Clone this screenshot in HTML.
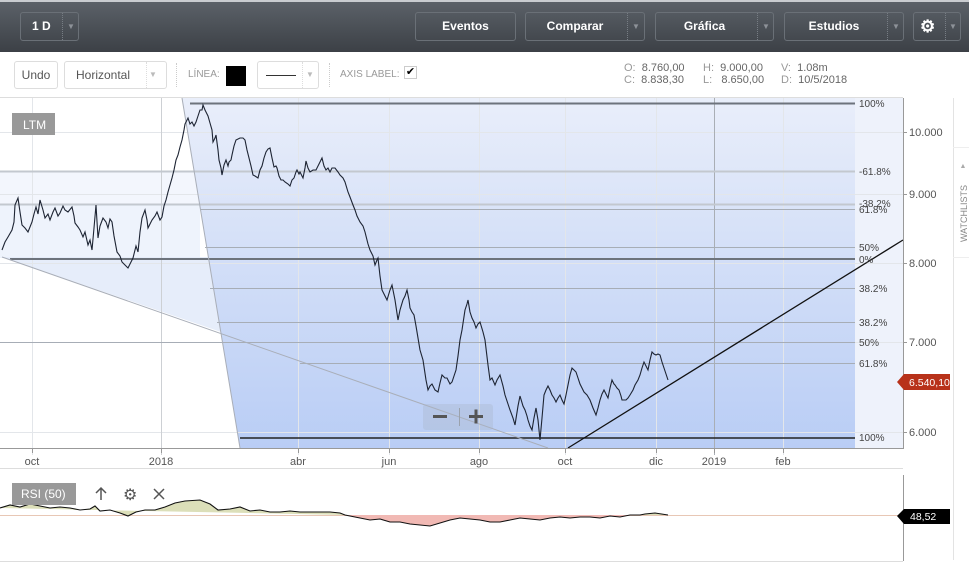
<!DOCTYPE html>
<html><head><meta charset="utf-8"><style>
*{margin:0;padding:0;box-sizing:border-box}
body{width:969px;height:565px;overflow:hidden;background:#fff;font-family:"Liberation Sans",sans-serif;position:relative}
.top{position:absolute;left:0;top:0;width:969px;height:52px;background:linear-gradient(#5b6168,#3c4046);border-top:2px solid #c9ccd0}
.btn{position:absolute;top:10px;height:29px;border:1px solid #6a7077;border-radius:3px;color:#fff;font-weight:bold;font-size:12px;line-height:27px;text-align:center}
.btn .sep{position:absolute;top:0;bottom:0;border-left:1px dotted #777d84}
.btn .ar{position:absolute;top:0;width:16px;text-align:center;font-size:8px;color:#8d9298}
.tb{position:absolute;top:61px;height:28px;border:1px solid #ddd;border-radius:3px;font-size:12px;color:#555;line-height:26px}
.lbl{position:absolute;font-size:10px;color:#999}
.vsep{position:absolute;top:63px;height:24px;border-left:1px dotted #ccc}
.ohlc{position:absolute;font-size:11px;color:#999;line-height:12px}
.ohlc b{font-weight:normal;color:#666}
</style></head><body>
<div class="top">
 <div class="btn" style="left:20px;width:59px;text-align:left;padding-left:11px">1 D<span class="sep" style="left:41px"></span><span class="ar" style="left:42px">▼</span></div>
 <div class="btn" style="left:415px;width:101px">Eventos</div>
 <div class="btn" style="left:525px;width:120px;padding-right:20px">Comparar<span class="sep" style="left:101px"></span><span class="ar" style="left:102px">▼</span></div>
 <div class="btn" style="left:655px;width:119px;padding-right:20px">Gráfica<span class="sep" style="left:101px"></span><span class="ar" style="left:102px">▼</span></div>
 <div class="btn" style="left:784px;width:120px;padding-right:20px">Estudios<span class="sep" style="left:102px"></span><span class="ar" style="left:103px">▼</span></div>
 <div class="btn" style="left:913px;width:48px;text-align:left;padding-left:6px;font-size:17px">⚙<span class="sep" style="left:31px"></span><span class="ar" style="left:31px">▼</span></div>
</div>
<div class="tb" style="left:14px;width:44px;text-align:center">Undo</div>
<div class="tb" style="left:64px;width:103px;padding-left:11px">Horizontal<span style="position:absolute;left:81px;top:0;bottom:0;border-left:1px dotted #ddd"></span><span style="position:absolute;left:84px;font-size:8px;color:#bbb">▼</span></div>
<div class="vsep" style="left:176px"></div>
<div class="lbl" style="left:188px;top:69px">LÍNEA:</div>
<div style="position:absolute;left:226px;top:66px;width:20px;height:20px;background:#000"></div>
<div class="tb" style="left:257px;width:62px"><span style="position:absolute;left:8px;top:13px;width:30px;border-top:1px solid #333"></span><span style="position:absolute;left:44px;top:0;bottom:0;border-left:1px dotted #ddd"></span><span style="position:absolute;left:48px;font-size:8px;color:#bbb">▼</span></div>
<div class="vsep" style="left:329px"></div>
<div class="lbl" style="left:340px;top:69px">AXIS LABEL:</div>
<div style="position:absolute;left:404px;top:66px;width:13px;height:13px;border:1px solid #ccc;font-size:11px;line-height:11px;text-align:center">✔</div>
<div class="ohlc" style="left:624px;top:62px">O:&nbsp; <b>8.760,00</b><br>C:&nbsp; <b>8.838,30</b></div>
<div class="ohlc" style="left:703px;top:62px">H:&nbsp; <b>9.000,00</b><br>L:&nbsp;&nbsp; <b>8.650,00</b></div>
<div class="ohlc" style="left:781px;top:62px">V:&nbsp; <b>1.08m</b><br>D:&nbsp; <b>10/5/2018</b></div>

<svg style="position:absolute;left:0;top:0" width="969" height="565" font-family="Liberation Sans, sans-serif">
<defs><linearGradient id="g" x1="0" y1="0" x2="0" y2="1"><stop offset="0" stop-color="#e9eefa"/><stop offset="1" stop-color="#b9cdf5"/></linearGradient></defs>
<line x1="0" y1="97.5" x2="903" y2="97.5" stroke="#ddd"/>
<rect x="0" y="172" width="200" height="86" fill="#f3f6fd"/>
<rect x="0" y="204" width="200" height="54" fill="#eef3fc"/>
<polygon points="2,257 855,257 855,448 560,448" fill="#e6edfa"/>
<polygon points="182,98 855,98 855,448 240,448" fill="url(#g)"/>
<rect x="855" y="98" width="48" height="350" fill="#eef2fb"/>
<g stroke="#e3e6ea" stroke-width="1">
<line x1="0" y1="132.5" x2="903" y2="132.5"/><line x1="0" y1="194.5" x2="903" y2="194.5"/><line x1="0" y1="263.5" x2="903" y2="263.5"/><line x1="0" y1="342.5" x2="903" y2="342.5"/><line x1="0" y1="432.5" x2="903" y2="432.5"/>
<line x1="32.5" y1="98" x2="32.5" y2="455"/><line x1="298.5" y1="98" x2="298.5" y2="455"/><line x1="389.5" y1="98" x2="389.5" y2="455"/><line x1="479.5" y1="98" x2="479.5" y2="455"/><line x1="565.5" y1="98" x2="565.5" y2="455"/><line x1="656.5" y1="98" x2="656.5" y2="455"/><line x1="783.5" y1="98" x2="783.5" y2="455"/>
</g>
<line x1="161.5" y1="98" x2="161.5" y2="455" stroke="#cdd0d4"/>
<line x1="714.5" y1="98" x2="714.5" y2="455" stroke="#a9aeb5"/>
<g stroke="#a7adb6" stroke-width="1">
<line x1="0" y1="171.5" x2="855" y2="171.5" stroke="#c3c8cf" stroke-width="2"/>
<line x1="0" y1="204.5" x2="855" y2="204.5" stroke="#c3c8cf" stroke-width="2"/>
<line x1="200" y1="209.5" x2="855" y2="209.5"/>
<line x1="205" y1="247.5" x2="855" y2="247.5"/>
<line x1="210" y1="288.5" x2="855" y2="288.5"/>
<line x1="217" y1="322.5" x2="855" y2="322.5"/>
<line x1="0" y1="342.5" x2="855" y2="342.5"/>
<line x1="300" y1="363.5" x2="855" y2="363.5"/>
</g>
<line x1="190" y1="103.5" x2="855" y2="103.5" stroke="#6d737c" stroke-width="2"/>
<line x1="10" y1="259" x2="855" y2="259" stroke="#6d737c" stroke-width="2"/>
<line x1="240" y1="438" x2="855" y2="438" stroke="#222" stroke-width="1.5"/>
<line x1="182" y1="98" x2="240" y2="448" stroke="#a9aeb8"/>
<line x1="2" y1="257" x2="548" y2="448" stroke="#a9aeb8"/>
<line x1="568" y1="448" x2="903" y2="240" stroke="#111" stroke-width="1.3"/>
<g font-size="10" fill="#444">
<text x="859" y="107">100%</text><text x="859" y="175">-61.8%</text><text x="859" y="207">-38.2%</text><text x="859" y="213">61.8%</text><text x="859" y="251">50%</text><text x="859" y="263">0%</text><text x="859" y="292">38.2%</text><text x="859" y="326">38.2%</text><text x="859" y="346">50%</text><text x="859" y="367">61.8%</text><text x="859" y="441">100%</text>
</g>
<polyline fill="none" stroke="#1d2433" stroke-width="1.1" points="2,250 5,242 8,237 12,230 14,222 15,205 18,198 20,212 22,225 25,228 28,232 32,222 34,214 36,207 38,214 40,200 43,210 45,218 48,214 50,220 53,212 55,208 58,216 60,213 63,206 65,210 68,212 72,207 74,216 75,223 78,227 80,230 83,237 85,232 88,245 90,240 92,250 94,228 96,205 98,238 100,226 103,218 106,222 108,228 110,219 112,222 114,236 117,252 120,256 122,262 125,265 128,268 131,262 133,258 136,246 138,252 140,232 142,218 145,210 147,220 148,228 150,224 152,220 155,216 157,212 160,220 162,217 164,206 166,200 168,192 170,185 172,178 174,170 176,160 178,155 180,147 182,140 184,130 185,124 188,118 190,124 192,122 194,126 196,122 198,116 200,110 202,110 203,105 205,110 206,112 208,116 210,123 212,130 213,142 215,138 216,135 218,150 219,160 221,168 222,175 224,165 226,160 228,166 229,162 231,160 232,155 234,146 236,140 240,138 243,138 245,140 247,150 249,158 251,166 253,175 255,176 258,178 260,170 262,166 264,158 266,152 268,149 270,148 272,158 274,167 276,166 277,168 279,176 281,180 283,180 285,182 288,184 290,186 292,180 294,178 296,172 297,170 299,174 300,172 302,176 303,178 305,168 306,161 308,168 310,172 313,170 316,170 319,164 322,158 324,166 326,170 328,168 330,172 332,168 335,168 338,172 340,175 343,178 345,182 348,192 350,197 353,205 355,210 357,216 360,222 363,226 365,232 368,244 370,250 373,256 375,265 377,260 378,258 380,276 382,290 385,296 387,300 390,290 392,285 395,300 398,320 400,310 403,300 405,296 407,290 409,300 410,308 412,312 414,315 416,326 418,338 420,350 423,360 426,380 428,390 430,386 432,384 435,390 438,392 440,383 442,375 445,378 447,378 450,384 452,382 454,376 456,370 458,356 460,340 462,330 465,310 467,304 468,300 470,312 472,318 474,322 476,328 478,324 480,322 483,332 485,340 488,365 490,380 492,378 495,385 497,380 500,375 503,386 505,395 508,404 510,410 513,418 515,425 518,406 520,396 523,406 525,410 527,416 528,420 530,426 532,430 534,418 536,408 538,420 540,440 542,418 544,395 546,390 548,386 550,390 552,395 554,398 556,402 558,398 560,395 562,400 564,404 566,395 568,385 570,375 572,368 574,370 576,372 578,378 580,384 582,388 584,392 587,395 590,400 593,408 596,415 598,408 600,400 602,394 604,390 606,394 608,398 610,388 612,380 614,384 615,385 617,388 619,390 621,396 622,400 624,400 626,400 628,398 630,395 633,390 635,385 638,380 640,375 642,368 644,362 646,366 648,370 650,360 652,352 654,354 656,355 658,354 660,355 662,362 664,368 666,374 668,380"/>
<rect x="423" y="404" width="70" height="26" rx="3" fill="#a9b4c8" opacity="0.35"/>
<line x1="459.5" y1="408" x2="459.5" y2="426" stroke="#9aa2ad"/>
<rect x="433" y="415" width="14" height="3" fill="#555"/>
<rect x="469" y="415" width="14" height="3" fill="#555"/><rect x="474.5" y="409.5" width="3" height="14" fill="#555"/>
<rect x="12" y="113" width="43" height="22" fill="#999"/>
<text x="23" y="129" font-size="12" fill="#fff">LTM</text>
<line x1="903.5" y1="98" x2="903.5" y2="449" stroke="#999"/>
<line x1="0" y1="448.5" x2="903" y2="448.5" stroke="#999"/>
<g stroke="#999"><line x1="32.5" y1="448" x2="32.5" y2="453"/><line x1="161.5" y1="448" x2="161.5" y2="453"/><line x1="298.5" y1="448" x2="298.5" y2="453"/><line x1="389.5" y1="448" x2="389.5" y2="453"/><line x1="479.5" y1="448" x2="479.5" y2="453"/><line x1="565.5" y1="448" x2="565.5" y2="453"/><line x1="656.5" y1="448" x2="656.5" y2="453"/><line x1="714.5" y1="448" x2="714.5" y2="453"/><line x1="783.5" y1="448" x2="783.5" y2="453"/>
<line x1="903" y1="132.5" x2="907" y2="132.5"/><line x1="903" y1="194.5" x2="907" y2="194.5"/><line x1="903" y1="263.5" x2="907" y2="263.5"/><line x1="903" y1="342.5" x2="907" y2="342.5"/><line x1="903" y1="432.5" x2="907" y2="432.5"/></g>
<g font-size="11" fill="#555"><text x="909" y="136">10.000</text><text x="909" y="198">9.000</text><text x="909" y="267">8.000</text><text x="909" y="346">7.000</text><text x="909" y="436">6.000</text></g>
<g font-size="11" fill="#555" text-anchor="middle"><text x="32" y="465">oct</text><text x="161" y="465">2018</text><text x="298" y="465">abr</text><text x="389" y="465">jun</text><text x="479" y="465">ago</text><text x="565" y="465">oct</text><text x="656" y="465">dic</text><text x="714" y="465">2019</text><text x="783" y="465">feb</text></g>
<line x1="0" y1="468.5" x2="903" y2="468.5" stroke="#ddd"/>
<polygon points="897,382 904,374 950,374 950,390 904,390" fill="#b8321a"/>
<text x="909" y="386" font-size="10.5" fill="#fff">6.540,10</text>
<line x1="953.5" y1="98" x2="953.5" y2="560" stroke="#e3e3e3"/>
<line x1="953" y1="147.5" x2="969" y2="147.5" stroke="#eee"/><line x1="953" y1="257.5" x2="969" y2="257.5" stroke="#eee"/>
<text x="963" y="168" font-size="7" fill="#aaa" text-anchor="middle">▲</text>
<text transform="translate(967,242) rotate(-90)" font-size="9" fill="#888">WATCHLISTS</text>
<line x1="903.5" y1="475" x2="903.5" y2="561" stroke="#999"/>
<line x1="0" y1="561.5" x2="903" y2="561.5" stroke="#ddd"/>
<line x1="0" y1="515.5" x2="903" y2="515.5" stroke="#e8c7b5"/>
<path d="M0,508 L10,505 20,507 30,504 40,506 50,508 60,507 70,508 80,510 90,509 95,506 100,511 110,510 120,513 128,516 136,512 145,510 155,510 165,507 175,503 185,501 200,500 210,504 218,510 230,509 240,507 250,511 260,510 270,512 280,512 290,511 300,512 310,512 320,512 330,512 340,513 345,515 Z" fill="#dcdfb9"/>
<path d="M345,515 L360,518 370,520 380,519 390,522 400,522 410,524 420,525 430,526 440,523 450,520 460,518 470,519 480,520 490,522 500,522 510,520 520,518 530,519 540,520 550,518 560,517 570,518 580,517 590,517 600,518 610,516 620,517 630,515 640,515 Z" fill="#f1b9b4"/>
<path d="M640,515 L645,514 655,513 668,515 Z" fill="#dcdfb9"/>
<polyline fill="none" stroke="#111" stroke-width="1.1" points="0,508 10,505 20,507 30,504 40,506 50,508 60,507 70,508 80,510 90,509 95,506 100,511 110,510 120,513 128,516 136,512 145,510 155,510 165,507 175,503 185,501 200,500 210,504 218,510 230,509 240,507 250,511 260,510 270,512 280,512 290,511 300,512 310,512 320,512 330,512 340,513 345,515 360,518 370,520 380,519 390,522 400,522 410,524 420,525 430,526 440,523 450,520 460,518 470,519 480,520 490,522 500,522 510,520 520,518 530,519 540,520 550,518 560,517 570,518 580,517 590,517 600,518 610,516 620,517 630,515 640,515 645,514 655,513 668,515"/>
<rect x="12" y="483" width="64" height="22" fill="#999"/>
<text x="21" y="498" font-size="12" fill="#fff">RSI (50)</text>
<g stroke="#555" stroke-width="1.5" fill="none"><path d="M101,500 V488 M96,493 L101,488 106,493"/><path d="M154,489 L164,499 M164,489 L154,499"/></g>
<text x="123" y="500" font-size="16" fill="#555">⚙</text>
<polygon points="897,516 904,509 950,509 950,524 904,524" fill="#000"/>
<text x="910" y="520" font-size="10.5" fill="#fff">48,52</text>
</svg>
</body></html>
